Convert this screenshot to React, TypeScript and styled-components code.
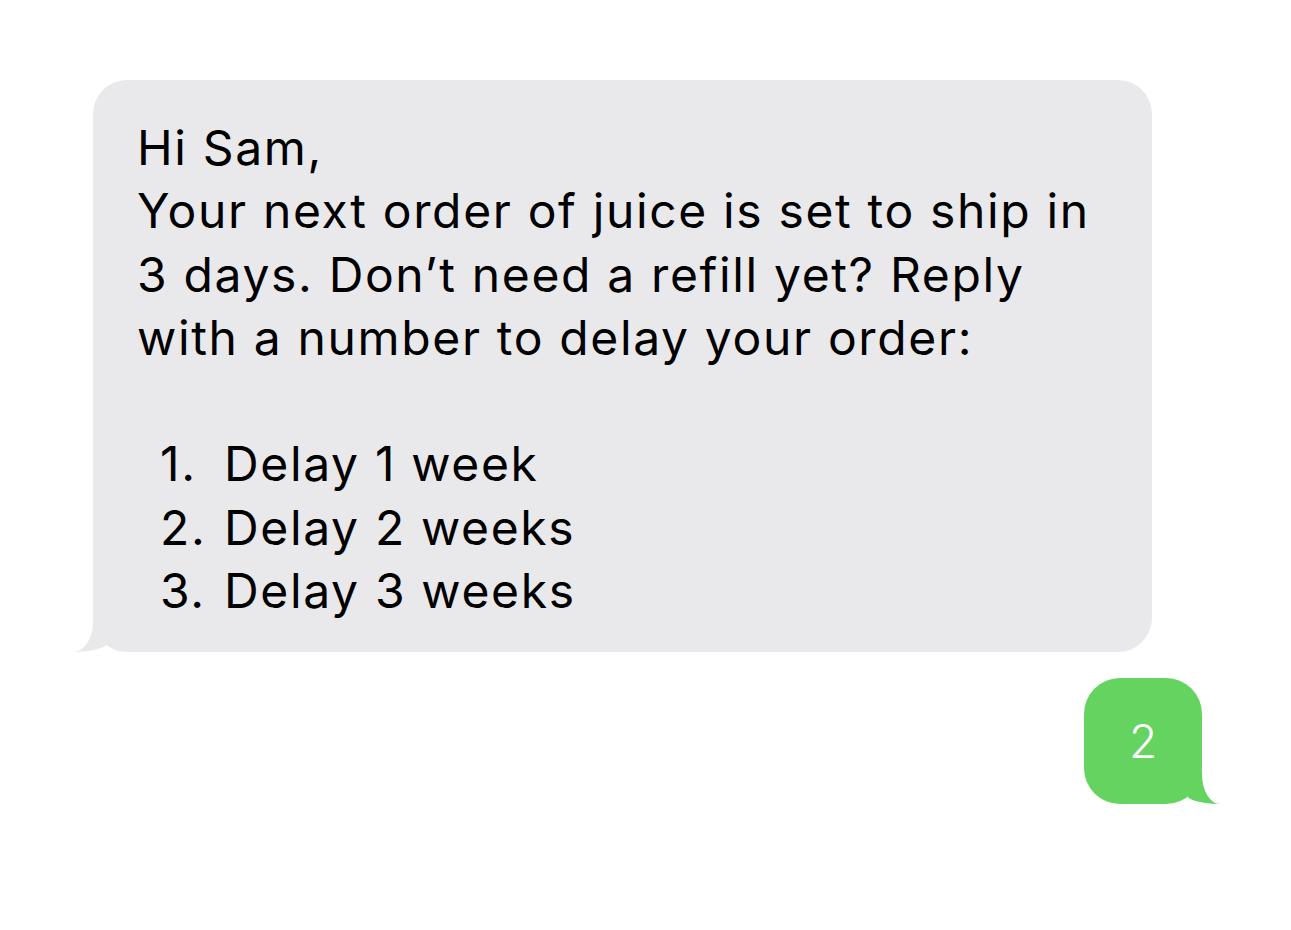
import React from 'react';
import styled, {createGlobalStyle} from "styled-components";

const GlobalStyle = createGlobalStyle`
    html, body {
        margin: 0;
        padding: 0;
        background: #ffffff;
    }

    body {
        font-family: Inter, "Noto Sans", "Liberation Sans", sans-serif;
        -webkit-font-smoothing: antialiased;
    }
`;

const GRAY = "#e9e9eb";
const GREEN = "#65d35f";

const StyledThread = styled.div`
    display: flex;
    flex-direction: column;
    width: 1291px;
    min-height: 930px;
    padding-top: 80px;
    box-sizing: border-box;
`;

const StyledIncoming = styled.div`
    position: relative;
    align-self: flex-start;
    margin-left: 93px;
    width: 1059px;
    box-sizing: border-box;
    padding: 36px 40px 30px 44px;
    background: ${GRAY};
    border-radius: 34px;
    color: #000;
    font-size: 48px;
    line-height: 63.3px;
    letter-spacing: 1.65px;

    &::before {
        content: "";
        position: absolute;
        bottom: 0;
        left: -20px;
        width: 35px;
        height: 34px;
        background: ${GRAY};
        border-bottom-right-radius: 35px 10px;
    }

    &::after {
        content: "";
        position: absolute;
        bottom: 0;
        left: -40px;
        width: 40px;
        height: 34px;
        background: #ffffff;
        border-bottom-right-radius: 20px 30px;
    }
`;

const StyledParagraph = styled.p`
    margin: 0 0 63.3px;
    white-space: nowrap;
`;

const StyledList = styled.ol`
    list-style: none;
    margin: 0;
    padding: 0 0 0 23px;
`;

const StyledItem = styled.li`
    display: grid;
    grid-template-columns: 64px 1fr;
    white-space: nowrap;
`;

const StyledReplyRow = styled.div`
    display: flex;
    justify-content: flex-end;
    margin-top: 26px;
    padding-right: 89px;
`;

const StyledOutgoing = styled.div`
    position: relative;
    width: 118px;
    height: 126px;
    display: flex;
    align-items: center;
    justify-content: center;
    background: ${GREEN};
    border-radius: 36px;
    color: #ffffff;
    font-size: 46px;
    font-weight: 300;

    &::before {
        content: "";
        position: absolute;
        bottom: 0;
        right: -18px;
        width: 33px;
        height: 34px;
        background: ${GREEN};
        border-bottom-left-radius: 33px 9px;
    }

    &::after {
        content: "";
        position: absolute;
        bottom: 0;
        right: -40px;
        width: 40px;
        height: 34px;
        background: #ffffff;
        border-bottom-left-radius: 18px 30px;
    }
`;

const options = ["Delay 1 week", "Delay 2 weeks", "Delay 3 weeks"];

const App = () => {
    return (
        <>
            <GlobalStyle/>
            <StyledThread>
                <StyledIncoming>
                    <StyledParagraph>
                        Hi Sam,<br/>
                        Your next order of juice is set to ship in<br/>
                        3 days. Don’t need a refill yet? Reply<br/>
                        with a number to delay your order:
                    </StyledParagraph>
                    <StyledList>
                        {options.map((option, i) => (
                            <StyledItem key={option}>
                                <span>{i + 1}.</span>
                                <span>{option}</span>
                            </StyledItem>
                        ))}
                    </StyledList>
                </StyledIncoming>
                <StyledReplyRow>
                    <StyledOutgoing>2</StyledOutgoing>
                </StyledReplyRow>
            </StyledThread>
        </>
    );
};

export default App;
